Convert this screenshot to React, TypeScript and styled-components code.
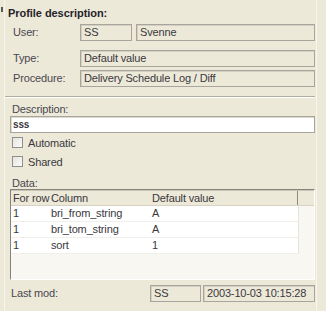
import React from 'react';
import styled, { createGlobalStyle } from 'styled-components';

const Global = createGlobalStyle`
  html, body { margin: 0; padding: 0; background: #ECE9D8; }
  body { font-family: "Liberation Sans", Arial, sans-serif; font-size: 11px; letter-spacing: -0.15px; color: #3b3840; }
`;

const Screen = styled.div`
  width: 326px;
  height: 311px;
  display: flex;
  align-items: flex-start;
  background: #ECE9D8;
  overflow: hidden;
`;

const Marker = styled.div`
  width: 2px;
  height: 5px;
  margin: 7px 0 0 1px;
  background: #5a5a5a;
`;

const Panel = styled.div`
  margin-left: 1px;
  width: 313px;
  height: 311px;
  box-sizing: border-box;
  border-left: 1px solid #f6f5ee;
  border-right: 1px solid #f6f5ee;
  padding: 6px 1px 0 5px;
  display: flex;
  flex-direction: column;
`;

const Title = styled.div`
  height: 14px;
  line-height: 14px;
  margin-left: -2px;
  font-weight: bold;
  letter-spacing: -0.05px;
  color: #26232a;
`;

const FieldRow = styled.div<{ $top: number }>`
  display: grid;
  grid-template-columns: 70px 1fr;
  height: 17px;
  margin-top: ${p => p.$top}px;
`;

const Label = styled.div`
  padding-left: 3px;
  line-height: 17px;
  color: #4a4750;
`;

const Boxes = styled.div`
  display: flex;
  gap: 4px;
`;

const ReadBox = styled.div<{ $w?: number }>`
  box-sizing: border-box;
  height: 17px;
  ${p => (p.$w ? `width: ${p.$w}px;` : 'flex: 1;')}
  border: 1px solid #a7a59c;
  box-shadow: inset 1px 1px 0 #d3d0c3;
  background: #ECE9D8;
  padding-left: 3px;
  line-height: 15px;
  white-space: nowrap;
  overflow: hidden;
`;

const Separator = styled.div`
  margin: 9px 0 0 -5px;
  height: 0;
  border-top: 1px solid #b0ad9e;
  border-bottom: 1px solid #ffffff;
`;

const SmallLabel = styled.div<{ $top: number; $h: number; $pad: number }>`
  margin-top: ${p => p.$top}px;
  height: ${p => p.$h}px;
  line-height: ${p => p.$h}px;
  padding-left: ${p => p.$pad}px;
  color: #4a4750;
`;

const TextInput = styled.div`
  box-sizing: border-box;
  height: 17px;
  border: 1px solid #a7a59c;
  box-shadow: inset 1px 1px 0 #dcdad0;
  background: #ffffff;
  padding-left: 2px;
  line-height: 15px;
  font-weight: bold;
  font-size: 10px;
  color: #3b3840;
`;

const CheckRow = styled.div<{ $top: number }>`
  margin-top: ${p => p.$top}px;
  height: 13px;
  display: flex;
  align-items: center;
  gap: 5px;
  padding-left: 2px;
`;

const Box = styled.span`
  box-sizing: border-box;
  width: 11px;
  height: 11px;
  border: 1px solid #8f8f8c;
  background: linear-gradient(135deg, #e6e5df, #fbfbf8);
`;

const ListView = styled.div`
  box-sizing: border-box;
  width: 305px;
  height: 91px;
  border-top: 1px solid #85837a;
  border-left: 1px solid #85837a;
  border-right: 1px solid #ffffff;
  border-bottom: 1px solid #ffffff;
  background: #f8f7f1;
`;

const cols = '38px 101px 148px';

const Header = styled.div`
  box-sizing: border-box;
  display: grid;
  grid-template-columns: ${cols} 1fr;
  height: 16px;
  background: #ECE9D8;
  border-top: 1px solid #c9c6b8;
  border-bottom: 1px solid #d6d3c5;
`;

const HeadCell = styled.div<{ $edge?: boolean }>`
  padding-left: 2px;
  line-height: 14px;
  white-space: nowrap;
  color: #3b3840;
  ${p => (p.$edge ? 'border-right: 1px solid #8d8b80;' : '')}
`;

const DataRow = styled.div`
  box-sizing: border-box;
  display: grid;
  grid-template-columns: ${cols};
  width: 288px;
  height: 16px;
  background: #ffffff;
  border-bottom: 1px solid #f0efea;
  border-right: 1px solid #e4e3dc;
`;

const Cell = styled.div`
  padding-left: 2px;
  line-height: 15px;
  white-space: nowrap;
  color: #3b3840;
`;

const FootRow = styled.div`
  margin-top: 5px;
  height: 17px;
  display: flex;
`;

const FootLabel = styled.div`
  width: 139px;
  padding-left: 1px;
  line-height: 17px;
  color: #4a4750;
`;

const FootBoxes = styled.div`
  flex: 1;
  display: flex;
  gap: 2px;
`;

const rows = [
  ['1', 'bri_from_string', 'A'],
  ['1', 'bri_tom_string', 'A'],
  ['1', 'sort', '1'],
];

export default function App() {
  return (
    <>
      <Global />
      <Screen>
        <Marker />
        <Panel>
          <Title>Profile description:</Title>
          <FieldRow $top={4}>
            <Label>User:</Label>
            <Boxes>
              <ReadBox $w={52}>SS</ReadBox>
              <ReadBox>Svenne</ReadBox>
            </Boxes>
          </FieldRow>
          <FieldRow $top={9}>
            <Label>Type:</Label>
            <Boxes>
              <ReadBox>Default value</ReadBox>
            </Boxes>
          </FieldRow>
          <FieldRow $top={3}>
            <Label>Procedure:</Label>
            <Boxes>
              <ReadBox>Delivery Schedule Log / Diff</ReadBox>
            </Boxes>
          </FieldRow>
          <Separator />
          <SmallLabel $top={4} $h={14} $pad={2}>Description:</SmallLabel>
          <TextInput>sss</TextInput>
          <CheckRow $top={3}>
            <Box />
            <span>Automatic</span>
          </CheckRow>
          <CheckRow $top={6}>
            <Box />
            <span>Shared</span>
          </CheckRow>
          <SmallLabel $top={9} $h={12} $pad={2}>Data:</SmallLabel>
          <ListView>
            <Header>
              <HeadCell>For row</HeadCell>
              <HeadCell>Column</HeadCell>
              <HeadCell $edge>Default value</HeadCell>
              <HeadCell />
            </Header>
            {rows.map((r, i) => (
              <DataRow key={i}>
                <Cell>{r[0]}</Cell>
                <Cell>{r[1]}</Cell>
                <Cell>{r[2]}</Cell>
              </DataRow>
            ))}
          </ListView>
          <FootRow>
            <FootLabel>Last mod:</FootLabel>
            <FootBoxes>
              <ReadBox $w={51}>SS</ReadBox>
              <ReadBox>2003-10-03 10:15:28</ReadBox>
            </FootBoxes>
          </FootRow>
        </Panel>
      </Screen>
    </>
  );
}
